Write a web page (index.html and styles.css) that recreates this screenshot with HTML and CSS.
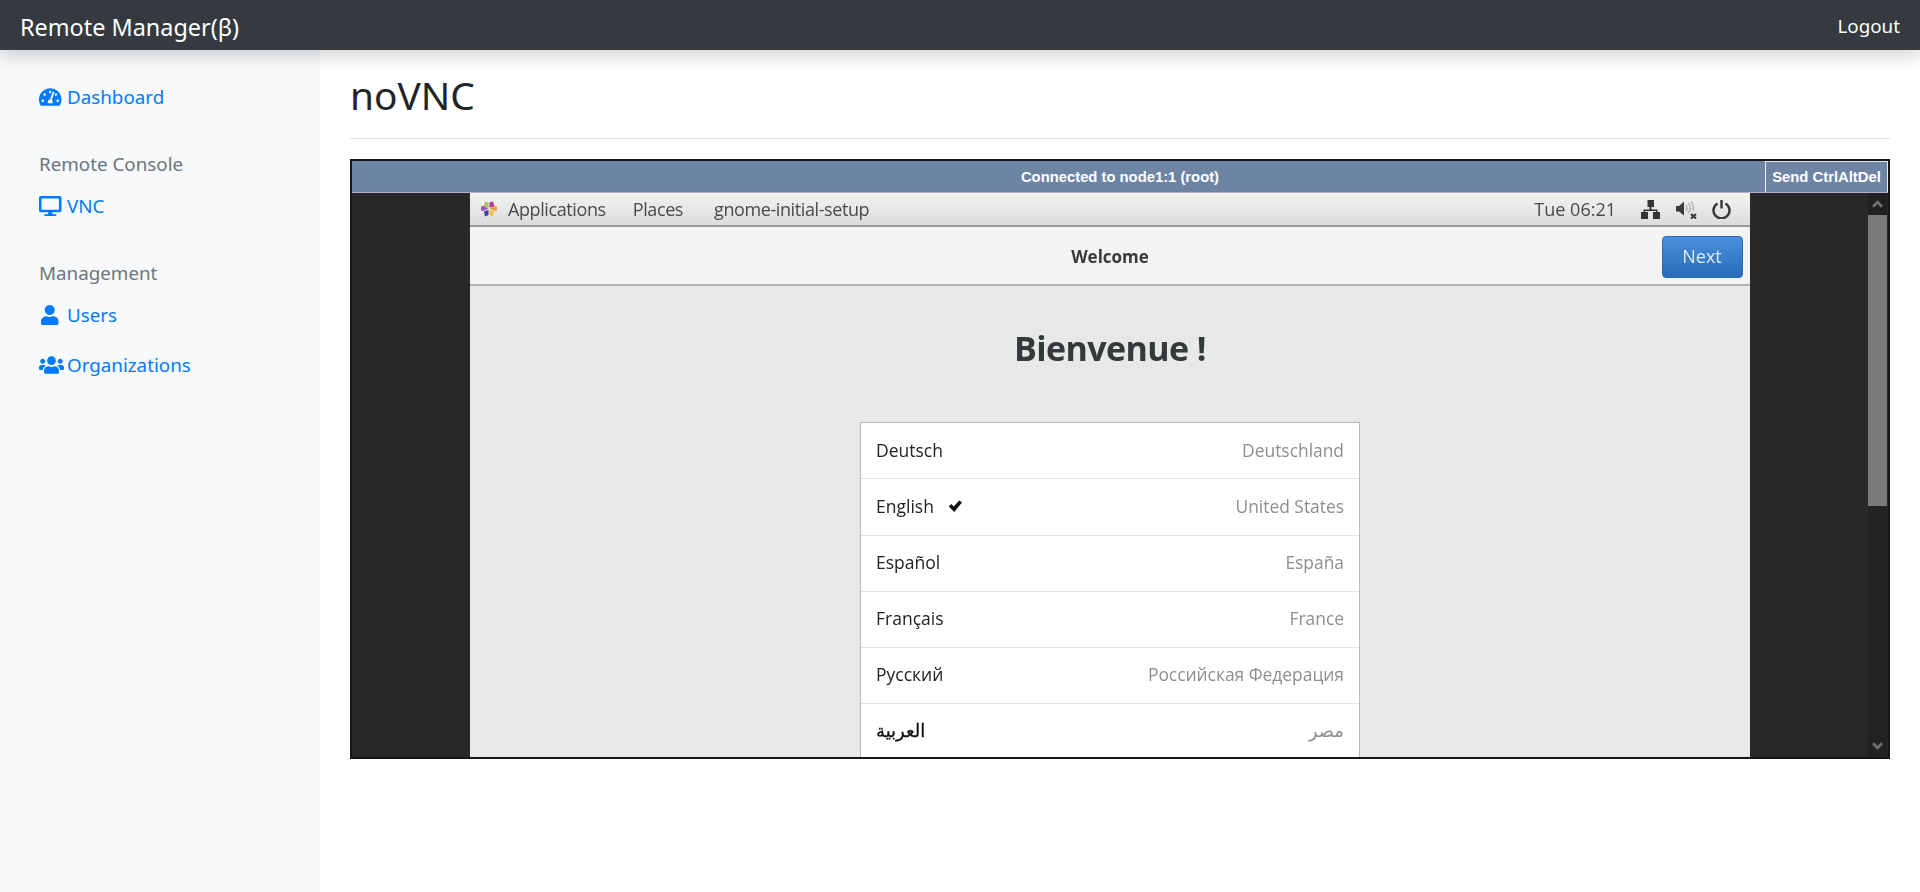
FILE: index.html
```html
<!DOCTYPE html>
<html lang="en">
<head>
<meta charset="utf-8">
<title>noVNC</title>
<link rel="stylesheet" href="styles.css">
</head>
<body>
<header class="navbar">
  <a class="brand">Remote Manager(β)</a>
  <a class="logout">Logout</a>
</header>
<div class="layout">
  <aside class="sidebar">
    <a class="side-link first"><span class="ico"><svg class="fa" viewBox="0 0 576 512"><path d="M288 32C128.94 32 0 160.94 0 320c0 52.8 14.25 102.26 39.06 144.8 5.61 9.62 16.3 15.2 27.44 15.2h443c11.14 0 21.83-5.58 27.44-15.2C561.75 422.26 576 372.8 576 320c0-159.06-128.94-288-288-288zm0 64c14.71 0 26.58 10.13 30.32 23.65-1.11 2.26-2.64 4.23-3.45 6.67l-9.22 27.67c-5.13 3.49-10.97 6.01-17.64 6.01-17.67 0-32-14.33-32-32S270.33 96 288 96zM96 384c-17.67 0-32-14.33-32-32s14.33-32 32-32 32 14.33 32 32-14.33 32-32 32zm48-160c-17.67 0-32-14.33-32-32s14.33-32 32-32 32 14.33 32 32-14.33 32-32 32zm246.77-72.41l-61.33 184C343.13 347.33 352 364.54 352 384c0 11.72-3.38 22.55-8.88 32H232.88c-5.5-9.45-8.88-20.28-8.88-32 0-33.94 26.5-61.43 59.9-63.59l61.34-184.01c4.17-12.56 17.73-19.45 30.36-15.17 12.57 4.19 19.35 17.77 15.17 30.36zm14.66 57.2l15.52-46.55c3.47-1.29 7.13-2.23 11.05-2.23 17.67 0 32 14.33 32 32s-14.33 32-32 32c-11.38-.01-20.89-6.28-26.57-15.22zM480 384c-17.67 0-32-14.33-32-32s14.33-32 32-32 32 14.33 32 32-14.33 32-32 32z"/></svg></span><span>Dashboard</span></a>
    <div class="side-head">Remote Console</div>
    <a class="side-link"><span class="ico"><svg class="fa" viewBox="0 0 576 512"><path d="M528 0H48C21.5 0 0 21.5 0 48v320c0 26.5 21.5 48 48 48h192l-16 48h-72c-13.3 0-24 10.7-24 24s10.7 24 24 24h272c13.3 0 24-10.7 24-24s-10.7-24-24-24h-72l-16-48h192c26.5 0 48-21.5 48-48V48c0-26.5-21.5-48-48-48zm-16 352H64V64h448v288z"/></svg></span><span>VNC</span></a>
    <div class="side-head">Management</div>
    <a class="side-link"><span class="ico"><svg class="fa user" viewBox="0 0 448 512"><path d="M224 256c70.7 0 128-57.3 128-128S294.7 0 224 0 96 57.3 96 128s57.3 128 128 128zm89.6 32h-16.7c-22.2 10.2-46.9 16-72.9 16s-50.6-5.8-72.9-16h-16.7C60.2 288 0 348.2 0 422.4V464c0 26.5 21.5 48 48 48h352c26.5 0 48-21.5 48-48v-41.6c0-74.2-60.2-134.4-134.4-134.4z"/></svg></span><span>Users</span></a>
    <a class="side-link next"><span class="ico"><svg class="fa" viewBox="0 0 640 512"><path d="M96 224c35.3 0 64-28.7 64-64s-28.7-64-64-64-64 28.7-64 64 28.7 64 64 64zm448 0c35.3 0 64-28.7 64-64s-28.7-64-64-64-64 28.7-64 64 28.7 64 64 64zm32 32h-64c-17.6 0-33.5 7.1-45.1 18.6 40.3 22.1 68.9 62 75.1 109.4h66c17.7 0 32-14.3 32-32v-32c0-35.3-28.7-64-64-64zm-256 0c61.9 0 112-50.1 112-112S381.9 32 320 32 208 82.1 208 144s50.1 112 112 112zm76.8 32h-8.3c-20.8 10-43.9 16-68.5 16s-47.6-6-68.5-16h-8.3C179.6 288 128 339.6 128 403.2V432c0 26.5 21.5 48 48 48h288c26.5 0 48-21.5 48-48v-28.8c0-63.6-51.6-115.2-115.2-115.2zm-223.7-13.4C161.5 263.1 145.6 256 128 256H64c-35.3 0-64 28.7-64 64v32c0 17.7 14.3 32 32 32h65.9c6.3-47.4 34.9-87.3 75.2-109.4z"/></svg></span><span>Organizations</span></a>
  </aside>
  <main class="content">
    <h1 class="title">noVNC</h1>
    <section class="vnc">
      <div class="vnc-status">
        <div class="vnc-msg">Connected to node1:1 (root)</div>
        <div class="vnc-send">Send CtrlAltDel</div>
      </div>
      <div class="vnc-view">
        <div class="guest">
          <div class="panel">
            <svg class="logo" viewBox="0 0 18 18">
              <path d="M5 1.500l3.500 1v5l-5-1z" fill="#a9c45a"/>
              <path d="M13 1.500l1.500 5-5 1v-5z" fill="#b5379a"/>
              <path d="M1 6.500l2.500-.5 5 2.500-5 2.500-2.500-.5z" fill="#9a58b8"/>
              <path d="M17 6.500l-2.500-.5-5 2.500 5 2.500 2.500-.5z" fill="#e8a33a"/>
              <path d="M4 11.500l4.500-1.500v5L5 16.500z" fill="#3f3fa8"/>
              <path d="M14 11.500L9.500 10v5l3.500 1.500z" fill="#f4c04e"/>
            </svg>
            <span class="menu apps">Applications</span>
            <span class="menu places">Places</span>
            <span class="menu">gnome-initial-setup</span>
            <span class="clock">Tue 06:21</span>
            <svg class="tray net" viewBox="0 0 19 19"><path d="M6.500 0h6.500v7h-2.500v2.500h6V12H19v7h-7v-7h3v-1h-11v1h3v7H0v-7h2.500V9.500H8.500V7H6.500z" fill="#333"/></svg>
            <svg class="tray vol" viewBox="0 0 21 19"><path d="M0 6h3l5-4.500v14L3 11.500H0z" fill="#3a3a3a"/><path d="M10 5q2 3 0 6M12.500 3q3.500 5 0 10M15 1q3.500 5 2 10" fill="none" stroke="#a8a8a8" stroke-width="1.200"/><path d="M15 14l5 4.500M20 14l-5 4.500" stroke="#333" stroke-width="2"/></svg>
            <svg class="tray pow" viewBox="0 0 19 19"><path d="M5.500 3.500a8 8 0 1 0 8 0" fill="none" stroke="#3a3a3a" stroke-width="2.500"/><path d="M9.500 0v8.500" stroke="#3a3a3a" stroke-width="2.500"/></svg>
          </div>
          <div class="header">
            <span class="header-title">Welcome</span>
            <span class="next-btn">Next</span>
          </div>
          <div class="guest-body">
            <div class="welcome">Bienvenue !</div>
            <div class="langs">
              <div class="lang"><span class="lang-name">Deutsch</span><span class="lang-region">Deutschland</span></div>
              <div class="lang"><span class="lang-name">English<svg class="check" viewBox="0 0 14 12"><path d="M.5 6.500L3 4l2.500 2.500L11 .5l2.800 2L6 12z" fill="#111"/></svg></span><span class="lang-region">United States</span></div>
              <div class="lang"><span class="lang-name">Español</span><span class="lang-region">España</span></div>
              <div class="lang"><span class="lang-name">Français</span><span class="lang-region">France</span></div>
              <div class="lang"><span class="lang-name">Русский</span><span class="lang-region">Российская Федерация</span></div>
              <div class="lang"><span class="lang-name ar ar-name" dir="rtl">العربية</span><span class="lang-region ar ar-region" dir="rtl">مصر</span></div>
            </div>
          </div>
        </div>
        <div class="scrollbar">
          <div class="sb-btn"><svg viewBox="0 0 12 8"><path d="M1 7l5-5 5 5" fill="none" stroke="#707070" stroke-width="3"/></svg></div>
          <div class="sb-thumb"></div>
          <div class="sb-track"></div>
          <div class="sb-btn"><svg viewBox="0 0 12 8"><path d="M1 1l5 5 5-5" fill="none" stroke="#707070" stroke-width="3"/></svg></div>
        </div>
      </div>
    </section>
  </main>
</div>
</body>
</html>
```

FILE: styles.css
```css
* { box-sizing: border-box; }
html, body { margin: 0; height: 100%; }
body {
  font-family: "Noto Sans", sans-serif;
  font-size: 18.8px;
  color: #212529;
  background: #fff;
  overflow: hidden;
}
.navbar {
  position: relative;
  z-index: 2;
  height: 50px;
  background: #343a40;
  display: flex;
  align-items: center;
  justify-content: space-between;
  padding: 0 20px;
  box-shadow: 0 8px 16px rgba(0, 0, 0, .15);
  color: #fff;
}
.brand { font-size: 23.4px; padding-top: 4px; }
.logout { padding-top: 2px; }
.layout { display: flex; height: 842px; }
.sidebar {
  flex: 0 0 320px;
  background: #f8f9fa;
  padding: 34px 0 0 39px;
}
.side-link {
  display: flex;
  align-items: center;
  height: 26px;
  color: #007bff;
  line-height: 26px;
}
.side-link.next { margin-top: 24px; }
.ico { flex: 0 0 28px; display: flex; align-items: center; }
.fa { height: 20px; width: auto; fill: #007bff; }
.fa.user { margin-left: 2px; }
.side-head { color: #6c757d; margin: 41px 0 16px; line-height: 26px; }
.content { flex: 1; padding: 21px 30px 0; min-width: 0; }
.title {
  margin: 0;
  font-weight: 400;
  font-size: 38.8px;
  line-height: 48px;
  padding-bottom: 19px;
  border-bottom: 1px solid #dee2e6;
}
.vnc {
  margin-top: 20px;
  height: 600px;
  border: 2px solid #14171a;
  display: flex;
  flex-direction: column;
  overflow: hidden;
}
.vnc-status {
  flex: 0 0 32px;
  overflow: hidden;
  display: flex;
  background: #6e84a3;
  border-bottom: 1px solid #aab4c4;
  color: #fff;
  font-family: "Liberation Sans", sans-serif;
  font-weight: 700;
  font-size: 14.8px;
}
.vnc-msg { flex: 1; text-align: center; line-height: 30px; padding: 1px 0 0 123px; }
.vnc-send {
  flex: 0 0 123px;
  border: 1px solid #e8ecf2;
  border-bottom: 0;
  text-align: center;
  line-height: 30px;
}
.vnc-view {
  flex: 1;
  min-height: 0;
  display: flex;
  background: #282828;
  padding-left: 118px;
}
.guest {
  flex: 0 0 1280px;
  display: flex;
  flex-direction: column;
  background: #e8e8e6;
  font-family: "Open Sans", sans-serif;
  font-size: 18px;
  overflow: hidden;
  filter: blur(.35px);
}
.panel {
  flex: 0 0 34px;
  display: flex;
  align-items: center;
  background: linear-gradient(#f3f3f2, #dcdcda);
  border-bottom: 2px solid #9a9a98;
  color: #4a4a4a;
  padding: 0 19px 0 10px;
}
.logo { width: 18px; height: 18px; margin-right: 10px; flex: none; }
.menu { letter-spacing: -.4px; }
.apps { margin-right: 27px; }
.places { margin-right: 31px; }
.clock { margin-left: auto; margin-right: 25px; }
.tray { height: 19px; width: 19px; flex: none; }
.net { margin-right: 16px; }
.vol { width: 21px; margin-right: 15px; }
.header {
  flex: 0 0 59px;
  position: relative;
  display: flex;
  align-items: center;
  justify-content: center;
  background: #f3f3f3;
  border-bottom: 2px solid #b4b4b2;
}
.header-title { font-weight: 700; color: #3a3a3a; font-size: 17px; padding-top: 1px; }
.next-btn {
  position: absolute;
  right: 7.500px;
  top: 9px;
  width: 81px;
  height: 42px;
  border-radius: 4px;
  border: 1px solid #2b6ab0;
  background: linear-gradient(#4a90dc, #2a6cbb);
  color: #dfe9f4;
  text-align: center;
  line-height: 38px;
}
.guest-body { display: flex; flex-direction: column; align-items: center; }
.welcome {
  margin-top: 39px;
  font-size: 34px;
  line-height: 46px;
  font-weight: 700;
  letter-spacing: -.6px;
  color: #333a3c;
}
.langs {
  margin-top: 51.300px;
  width: 500px;
  background: #fff;
  border: 1px solid #b8b8b4;
}
.lang {
  height: 56.200px;
  display: flex;
  align-items: center;
  justify-content: space-between;
  padding: 0 15px 2.500px;
  border-bottom: 1px solid #e3e3e1;
}
.lang-name { color: #222; display: flex; align-items: center; font-size: 17.500px; }
.lang-region { color: #8e8e8e; font-size: 17.400px; }
.ar { font-family: "DejaVu Sans", sans-serif; font-size: 18px; }
.ar-name { color: #111; -webkit-text-stroke: .3px #111; }
.ar-region { color: #8e8e8e; }
.check { width: 14.500px; height: 12px; margin-left: 14px; }
.scrollbar {
  flex: 0 0 19px;
  margin-left: 118px;
  background: #242424;
  display: flex;
  flex-direction: column;
}
.sb-btn { flex: 0 0 21.500px; background: #212121; display: flex; align-items: center; justify-content: center; }
.sb-btn svg { width: 11px; height: 8px; }
.sb-thumb { flex: 0 0 291px; background: #7a7a7a; }
.sb-track { flex: 1; }
```
